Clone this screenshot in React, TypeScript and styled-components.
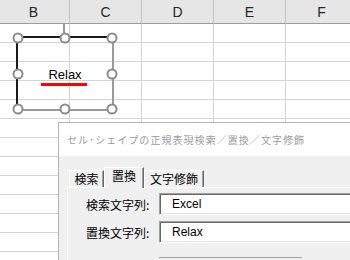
import styled, { createGlobalStyle } from 'styled-components';

const GlobalStyle = createGlobalStyle`
  html, body { margin: 0; padding: 0; background: #fff; overflow: hidden; }
  body { font-family: 'Liberation Sans', Arial, sans-serif; }
`;

const columns = ['B', 'C', 'D', 'E', 'F'];
const rowCount = 13;

const Sheet = styled.div`
  position: relative;
  width: 350px;
  height: 260px;
  overflow: hidden;
  background: #fff;
`;

const Grid = styled.div`
  display: grid;
  grid-template-columns: repeat(5, 72px);
  grid-template-rows: 24px;
  grid-auto-rows: 19px;
  margin-left: -2px;
`;

const HeadCell = styled.div`
  box-sizing: border-box;
  background: #e6e6e6;
  border-right: 1px solid #c4c4c4;
  border-bottom: 1px solid #9c9c9c;
  display: flex;
  align-items: center;
  justify-content: center;
  font-size: 14px;
  color: #262626;
`;

const Cell = styled.div`
  box-sizing: border-box;
  border-right: 1px solid #d4d4d4;
  border-bottom: 1px solid #d4d4d4;
`;

const Connector = styled.div`
  position: absolute;
  left: 63px;
  top: 23px;
  width: 2px;
  height: 10px;
  background: #9a9a9a;
`;

const Shape = styled.div`
  position: absolute;
  left: 16px;
  top: 36px;
  width: 98px;
  height: 75px;
  box-sizing: border-box;
  border-top: 2px solid #1a1a1a;
  border-left: 2px solid #1a1a1a;
  border-right: 2px solid #9a9a9a;
  border-bottom: 2px solid #9a9a9a;
  display: flex;
  flex-direction: column;
  align-items: center;
  justify-content: center;
  padding-top: 7px;
`;

const ShapeText = styled.div`
  font-size: 13px;
  line-height: 14px;
  color: #000;
`;

const RedBar = styled.div`
  width: 46px;
  height: 3px;
  background: #ff0000;
  margin-top: 1px;
  margin-right: 3px;
`;

const Handle = styled.div<{ $x: number; $y: number }>`
  position: absolute;
  left: ${p => p.$x}%;
  top: ${p => p.$y}%;
  width: 11px;
  height: 11px;
  box-sizing: border-box;
  border: 2px solid #8c8c8c;
  border-radius: 50%;
  background: #fff;
  transform: translate(-50%, -50%);
`;

const Dialog = styled.div`
  position: absolute;
  left: 58px;
  top: 122px;
  width: 320px;
  height: 170px;
  border: 1px solid #b4b4b4;
  background: #f0f0f0;
  font-family: 'Noto Sans CJK JP', 'Liberation Sans', sans-serif;
`;

const TitleBar = styled.div`
  height: 33px;
  background: #fff;
  padding-left: 8px;
  display: flex;
  align-items: center;
  font-size: 10px;
  letter-spacing: 1.05px;
  color: #9c9c9c;
  white-space: nowrap;
`;

const Body = styled.div`
  padding-top: 11px;
`;

const TabRow = styled.div`
  display: flex;
  align-items: flex-end;
  padding-left: 10px;
  position: relative;
  z-index: 1;
`;

const Tab = styled.div<{ $w: number; $active?: boolean }>`
  box-sizing: border-box;
  width: ${p => p.$w}px;
  height: ${p => (p.$active ? 21 : 17)}px;
  margin-bottom: ${p => (p.$active ? -1 : 0)}px;
  background: #f0f0f0;
  border-top: 1px solid #fff;
  border-left: 1px solid #fff;
  border-right: 1px solid #696969;
  box-shadow: inset -1px 0 #a0a0a0;
  display: flex;
  align-items: ${p => (p.$active ? 'flex-start' : 'center')};
  justify-content: center;
  font-size: 12px;
  line-height: 16px;
  color: #000;
`;

const Panel = styled.div`
  margin-left: 8px;
  border-top: 1px solid #fff;
  border-left: 1px solid #fff;
  padding: 5px 0 0 18px;
`;

const Fields = styled.div`
  display: grid;
  grid-template-columns: 73px 1fr;
  grid-auto-rows: 22px;
  row-gap: 6px;
`;

const Label = styled.div`
  display: flex;
  align-items: center;
  font-size: 12px;
  color: #000;
  white-space: nowrap;
`;

const Input = styled.div`
  box-sizing: border-box;
  background: #fff;
  border-top: 1px solid #a0a0a0;
  border-left: 1px solid #a0a0a0;
  border-bottom: 1px solid #fff;
  border-right: 1px solid #fff;
  box-shadow: inset 1px 1px #696969, inset -1px -1px #e3e3e3;
  padding-left: 12px;
  display: flex;
  align-items: center;
  font-family: 'Liberation Sans', Arial, sans-serif;
  font-size: 12px;
  color: #000;
`;

const Lower = styled.div`
  margin: 14px 0 0 73px;
  width: 143px;
  height: 10px;
  border-top: 1px solid #a0a0a0;
`;

const handles = [
  [0, 0], [50, 0], [100, 0],
  [0, 50], [100, 50],
  [0, 100], [50, 100], [100, 100],
];

export default function App() {
  return (
    <Sheet>
      <GlobalStyle />
      <Grid>
        {columns.map(c => <HeadCell key={c}>{c}</HeadCell>)}
        {Array.from({ length: rowCount * columns.length }).map((_, i) => <Cell key={i} />)}
      </Grid>
      <Connector />
      <Shape>
        <ShapeText>Relax</ShapeText>
        <RedBar />
        {handles.map(([x, y], i) => <Handle key={i} $x={x} $y={y} />)}
      </Shape>
      <Dialog>
        <TitleBar>セル･シェイプの正規表現検索／置換／文字修飾</TitleBar>
        <Body>
          <TabRow>
            <Tab $w={35}>検索</Tab>
            <Tab $w={40} $active>置換</Tab>
            <Tab $w={60}>文字修飾</Tab>
          </TabRow>
          <Panel>
            <Fields>
              <Label>検索文字列:</Label>
              <Input>Excel</Input>
              <Label>置換文字列:</Label>
              <Input>Relax</Input>
            </Fields>
            <Lower />
          </Panel>
        </Body>
      </Dialog>
    </Sheet>
  );
}
